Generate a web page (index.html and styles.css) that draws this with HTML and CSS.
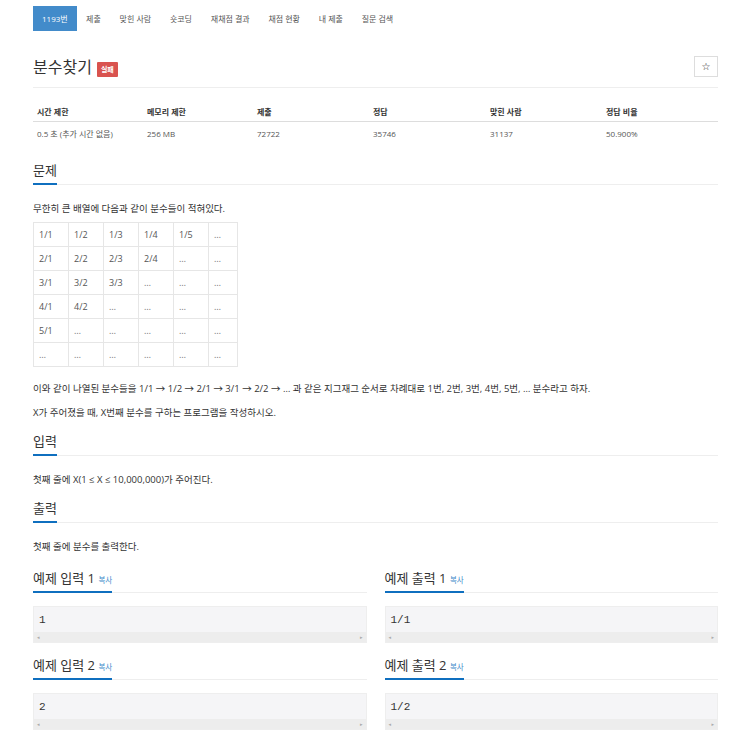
FILE: index.html
```html
<!DOCTYPE html>
<html lang="ko">
<head>
    <meta charset="UTF-8">
    <title>1193번: 분수찾기</title>
    <link rel="stylesheet" href="styles.css">
</head>
<body>
<div class="container">
    <ul class="problem-menu">
        <li class="active"><a href="#">1193번</a></li>
        <li><a href="#">제출</a></li>
        <li><a href="#">맞힌 사람</a></li>
        <li><a href="#">숏코딩</a></li>
        <li><a href="#">재채점 결과</a></li>
        <li><a href="#">채점 현황</a></li>
        <li><a href="#">내 제출</a></li>
        <li><a href="#">질문 검색</a></li>
    </ul>

    <div class="page-header">
        <h1>분수찾기 <span class="label-fail">실패</span></h1>
        <button type="button" class="star-btn">☆</button>
    </div>

    <table class="problem-info">
        <colgroup>
            <col class="w110"><col class="w110"><col class="w116">
            <col class="w117"><col class="w116"><col>
        </colgroup>
        <thead>
        <tr>
            <th>시간 제한</th>
            <th>메모리 제한</th>
            <th>제출</th>
            <th>정답</th>
            <th>맞힌 사람</th>
            <th>정답 비율</th>
        </tr>
        </thead>
        <tbody>
        <tr>
            <td>0.5 초 (추가 시간 없음)</td>
            <td>256 MB</td>
            <td>72722</td>
            <td>35746</td>
            <td>31137</td>
            <td>50.900%</td>
        </tr>
        </tbody>
    </table>

    <!-- 문제 -->
    <section class="problem-section first">
        <div class="headline"><h2>문제</h2></div>
        <p>무한히 큰 배열에 다음과 같이 분수들이 적혀있다.</p>
        <table class="fraction-table">
            <tr><td>1/1</td><td>1/2</td><td>1/3</td><td>1/4</td><td>1/5</td><td class="dots">…</td></tr>
            <tr><td>2/1</td><td>2/2</td><td>2/3</td><td>2/4</td><td class="dots">…</td><td class="dots">…</td></tr>
            <tr><td>3/1</td><td>3/2</td><td>3/3</td><td class="dots">…</td><td class="dots">…</td><td class="dots">…</td></tr>
            <tr><td>4/1</td><td>4/2</td><td class="dots">…</td><td class="dots">…</td><td class="dots">…</td><td class="dots">…</td></tr>
            <tr><td>5/1</td><td class="dots">…</td><td class="dots">…</td><td class="dots">…</td><td class="dots">…</td><td class="dots">…</td></tr>
            <tr><td class="dots">…</td><td class="dots">…</td><td class="dots">…</td><td class="dots">…</td><td class="dots">…</td><td class="dots">…</td></tr>
        </table>
        <p>이와 같이 나열된 분수들을 1/1 → 1/2 → 2/1 → 3/1 → 2/2 → … 과 같은 지그재그 순서로 차례대로 1번, 2번, 3번, 4번, 5번, … 분수라고 하자.</p>
        <p>X가 주어졌을 때, X번째 분수를 구하는 프로그램을 작성하시오.</p>
    </section>

    <!-- 입력 -->
    <section class="problem-section">
        <div class="headline"><h2>입력</h2></div>
        <p>첫째 줄에 X(1 ≤ X ≤ 10,000,000)가 주어진다.</p>
    </section>

    <!-- 출력 -->
    <section class="problem-section">
        <div class="headline"><h2>출력</h2></div>
        <p>첫째 줄에 분수를 출력한다.</p>
    </section>

    <!-- 예제 -->
    <div class="sample-grid">
        <section class="sample">
            <div class="headline"><h2>예제 입력 1 <a href="#" class="copy-btn">복사</a></h2></div>
            <div class="sampledata">
                <pre>1</pre>
                <div class="scrollbar"><span>◂</span><span>▸</span></div>
            </div>
        </section>
        <section class="sample">
            <div class="headline"><h2>예제 출력 1 <a href="#" class="copy-btn">복사</a></h2></div>
            <div class="sampledata">
                <pre>1/1</pre>
                <div class="scrollbar"><span>◂</span><span>▸</span></div>
            </div>
        </section>
        <section class="sample">
            <div class="headline"><h2>예제 입력 2 <a href="#" class="copy-btn">복사</a></h2></div>
            <div class="sampledata">
                <pre>2</pre>
                <div class="scrollbar"><span>◂</span><span>▸</span></div>
            </div>
        </section>
        <section class="sample">
            <div class="headline"><h2>예제 출력 2 <a href="#" class="copy-btn">복사</a></h2></div>
            <div class="sampledata">
                <pre>1/2</pre>
                <div class="scrollbar"><span>◂</span><span>▸</span></div>
            </div>
        </section>
    </div>
</div>
</body>
</html>
```

FILE: styles.css
```css
/* Global styles */
body {
    font-family: 'Open Sans', 'Noto Sans CJK KR', sans-serif;
    color: #333;
    background-color: #ffffff;
    margin: 0;
}

.container {
    padding: 0 32px 0 33px;
}

/* Problem menu */
.problem-menu {
    list-style: none;
    margin: 6px 0 0;
    padding: 0;
    display: flex;
}

.problem-menu a {
    display: block;
    height: 25px;
    line-height: 25px;
    padding: 0 9.4px;
    font-size: 8px;
    color: #555;
    text-decoration: none;
}

.problem-menu .active a {
    background-color: #428bca;
    color: #fff;
    padding: 0 9px;
}

/* Title */
.page-header {
    display: flex;
    justify-content: space-between;
    align-items: center;
    margin-top: 24px;
    padding-bottom: 8px;
    border-bottom: 1px solid #eee;
}

.page-header h1 {
    margin: 0;
    font-size: 16px;
    line-height: 24px;
    font-weight: 400;
    color: #333;
    display: flex;
    align-items: center;
    gap: 5px;
}

.label-fail {
    background-color: #d9534f;
    color: #fff;
    font-size: 7px;
    font-weight: 700;
    line-height: 15px;
    height: 15px;
    padding: 0 4px;
    margin-top: 5px;
    border-radius: 1px;
}

.star-btn {
    width: 24px;
    height: 21px;
    padding: 0;
    border: 1px solid #ddd;
    background: #fff;
    font-family: 'DejaVu Sans', sans-serif;
    font-size: 10px;
    font-weight: 700;
    color: #222;
    margin-top: -2px;
}

/* Info table */
.problem-info {
    width: 100%;
    border-collapse: collapse;
    table-layout: fixed;
    margin-top: 10px;
    font-size: 8px;
}

.problem-info .w110 { width: 110px; }
.problem-info .w116 { width: 116px; }
.problem-info .w117 { width: 117px; }

.problem-info th {
    text-align: left;
    font-weight: 700;
    padding: 8px 4px 3px;
    line-height: 12px;
    border-bottom: 1px solid #ddd;
    color: #333;
}

.problem-info td {
    padding: 6px 4px 4px;
    line-height: 12px;
    color: #555;
}

/* Sections */
.problem-section {
    margin-top: 9px;
}

.problem-section.first {
    margin-top: 14px;
}

.headline {
    border-bottom: 1px solid #eee;
}

.headline h2 {
    display: inline-block;
    margin: 0 0 -1px;
    font-size: 13px;
    line-height: 18px;
    font-weight: 400;
    color: #333;
    padding-bottom: 4px;
    border-bottom: 2px solid #0f6fbf;
}

.problem-section p {
    font-size: 9.5px;
    line-height: 15px;
    margin: 0 0 9px;
    color: #333;
}

.problem-section .headline + p {
    margin-top: 16px;
}

.problem-section .headline + p + .fraction-table {
    margin-top: -3px;
}

/* Fraction table */
.fraction-table {
    border-collapse: collapse;
    margin-bottom: 14px;
}

.fraction-table td {
    border: 1px solid #e6e6e6;
    width: 29px;
    height: 23px;
    padding: 0 0 0 5px;
    font-size: 9px;
    color: #555;
}

.fraction-table td:last-child {
    width: 23px;
}

.fraction-table .dots {
    color: #777;
}

/* Samples */
.sample-grid {
    display: grid;
    grid-template-columns: 1fr 1fr;
    column-gap: 18px;
    margin-top: 12px;
}

.sample {
    margin-bottom: 10px;
}

.copy-btn {
    font-size: 7.5px;
    line-height: 1;
    color: #428bca;
    text-decoration: none;
}

.sampledata {
    margin-top: 13px;
    background-color: #f5f5f7;
    border: 1px solid #eee;
}

.sampledata pre {
    margin: 0;
    height: 25px;
    line-height: 26px;
    padding: 0 5px;
    font-family: 'Liberation Mono', monospace;
    font-size: 11px;
    color: #333;
}

.scrollbar {
    height: 10px;
    background-color: #ededed;
    display: flex;
    justify-content: space-between;
    align-items: center;
    padding: 0 3px;
    font-family: 'DejaVu Sans', sans-serif;
    font-size: 5px;
    color: #aaa;
}
```
